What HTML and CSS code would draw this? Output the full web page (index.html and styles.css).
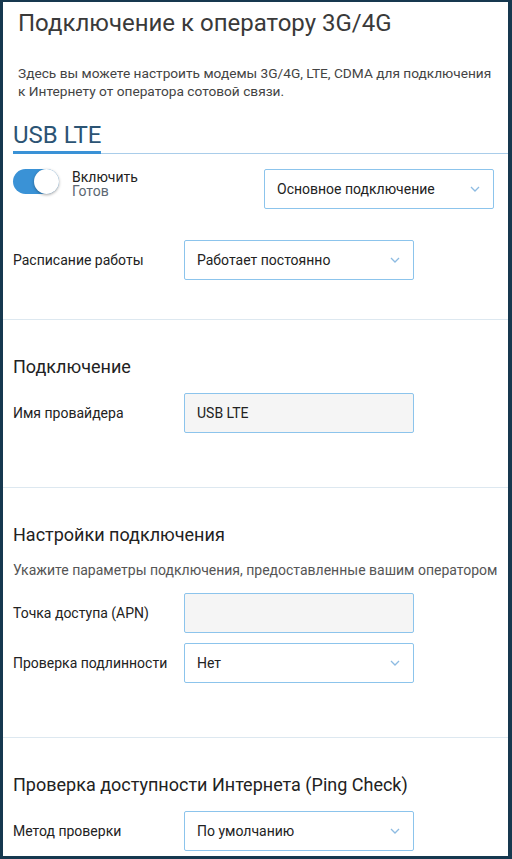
FILE: index.html
```html
<!DOCTYPE html>
<html lang="ru">
<head>
  <meta charset="UTF-8" />
  <meta name="viewport" content="width=device-width, initial-scale=1.0"/>
  <title>Подключение к оператору 3G/4G</title>
  <link rel="stylesheet" href="styles.css">
</head>
<body>

<div class="page">
  <h1 class="page-title">Подключение к оператору 3G/4G</h1>
  <p class="page-desc">Здесь вы можете настроить модемы 3G/4G, LTE, CDMA для подключения к Интернету от оператора сотовой связи.</p>

  <div class="tabs">
    <div class="tab active">USB LTE</div>
  </div>

  <div class="section first">
    <div class="state-row">
      <div class="switch-wrap">
        <div class="switch on"><span class="knob"></span></div>
        <div class="switch-text">
          <div class="switch-label">Включить</div>
          <div class="switch-status">Готов</div>
        </div>
      </div>
      <div class="select">
        <span>Основное подключение</span>
        <svg class="chevron" width="10" height="6" viewBox="0 0 10 6"><path d="M1 1l4 4 4-4" fill="none" stroke="#8dbbe2" stroke-width="1.3"/></svg>
      </div>
    </div>
    <div class="row">
      <label>Расписание работы</label>
      <div class="select">
        <span>Работает постоянно</span>
        <svg class="chevron" width="10" height="6" viewBox="0 0 10 6"><path d="M1 1l4 4 4-4" fill="none" stroke="#8dbbe2" stroke-width="1.3"/></svg>
      </div>
    </div>
  </div>

  <div class="section">
    <h2>Подключение</h2>
    <div class="row">
      <label>Имя провайдера</label>
      <div class="input">USB LTE</div>
    </div>
  </div>

  <div class="section">
    <h2>Настройки подключения</h2>
    <p class="hint">Укажите параметры подключения, предоставленные вашим оператором</p>
    <div class="row">
      <label>Точка доступа (APN)</label>
      <div class="input"></div>
    </div>
    <div class="row">
      <label>Проверка подлинности</label>
      <div class="select">
        <span>Нет</span>
        <svg class="chevron" width="10" height="6" viewBox="0 0 10 6"><path d="M1 1l4 4 4-4" fill="none" stroke="#8dbbe2" stroke-width="1.3"/></svg>
      </div>
    </div>
  </div>

  <div class="section">
    <h2>Проверка доступности Интернета (Ping Check)</h2>
    <div class="row">
      <label>Метод проверки</label>
      <div class="select">
        <span>По умолчанию</span>
        <svg class="chevron" width="10" height="6" viewBox="0 0 10 6"><path d="M1 1l4 4 4-4" fill="none" stroke="#8dbbe2" stroke-width="1.3"/></svg>
      </div>
    </div>
  </div>
</div>

</body>
</html>
```

FILE: styles.css
```css
html, body {
  height: 100%;
}
body {
  margin: 0;
  padding: 2px 4px 3px 3px;
  box-sizing: border-box;
  background-color: #16384f;
  font-family: Roboto, "Noto Sans", sans-serif;
  color: #222;
}
.page {
  background: #fff;
  height: 100%;
  overflow: hidden;
}
.page-title {
  margin: 0;
  padding: 6px 0 0 15px;
  font-size: 24px;
  line-height: 30px;
  font-weight: 400;
  color: #3a3a3a;
}
.page-desc {
  margin: 26px 0 0 15px;
  max-width: 480px;
  font-size: 13.7px;
  line-height: 18px;
  color: #444;
}
.tabs {
  margin: 22px 0 0 10px;
  border-bottom: 1px solid #a9cdea;
  display: flex;
}
.tab {
  font-size: 24px;
  line-height: 26px;
  color: #2c5474;
  padding-bottom: 3px;
  border-bottom: 3px solid #3a92d6;
  margin-bottom: -1px;
}
.section {
  border-top: 1px solid #dde8f0;
  padding: 35px 0 54px 10px;
}
.section.first {
  border-top: none;
  padding-top: 15px;
  padding-bottom: 39px;
}
.section h2 {
  margin: 0 0 14px;
  font-size: 18px;
  line-height: 24px;
  font-weight: 400;
  color: #222;
}
.hint {
  margin: 0 0 14px;
  font-size: 14px;
  line-height: 18px;
  color: #555;
}
.state-row {
  display: flex;
  justify-content: space-between;
  align-items: flex-start;
  padding-right: 14px;
  margin-bottom: 31px;
}
.switch-wrap {
  display: flex;
  align-items: flex-start;
}
.switch {
  width: 46px;
  height: 25px;
  border-radius: 13px;
  background: #3a92d6;
  position: relative;
}
.switch .knob {
  position: absolute;
  right: 0;
  top: 0;
  width: 25px;
  height: 25px;
  border-radius: 50%;
  background: #fff;
  box-shadow: 0 1px 3px rgba(0, 0, 0, 0.35);
}
.switch-text {
  margin: 1px 0 0 13px;
}
.switch-label {
  font-size: 14px;
  line-height: 14px;
  color: #222;
}
.switch-status {
  font-size: 14px;
  line-height: 14px;
  color: #5b6772;
}
.row {
  display: flex;
  align-items: center;
}
.row + .row {
  margin-top: 10px;
}
.row label {
  width: 171px;
  font-size: 14px;
  color: #222;
}
.select, .input {
  width: 230px;
  height: 40px;
  box-sizing: border-box;
  border: 1px solid #8cc4ec;
  border-radius: 2px;
  padding: 0 12px;
  display: flex;
  align-items: center;
  justify-content: space-between;
  font-size: 14px;
  color: #222;
}
.input {
  background: #f5f5f5;
}
.chevron {
  margin-right: 1px;
}
```
